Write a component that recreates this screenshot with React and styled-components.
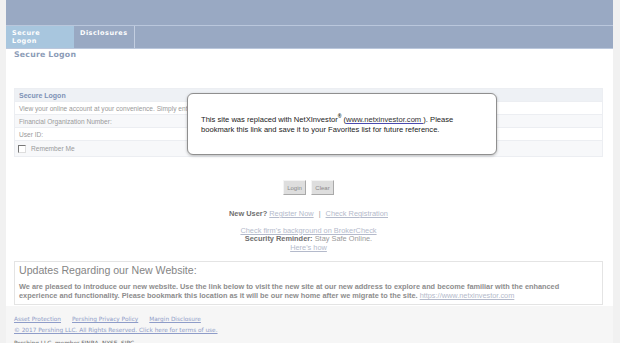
import React from "react";
import styled, { createGlobalStyle } from "styled-components";

const GlobalStyle = createGlobalStyle`
  body {
    margin: 0;
    background: #f1f1f1;
    font-family: "Liberation Sans", Arial, sans-serif;
  }
`;

const Page = styled.div`
  position: relative;
  width: 607px;
  margin-left: 6px;
  background: #fff;
  height: 343px;
  overflow: hidden;
`;

const Header = styled.div`
  height: 25px;
  background: #99a9c3;
  border-bottom: 1px solid #bac7dc;
`;

const TabBar = styled.div`
  display: flex;
  height: 22px;
  background: #99a9c3;
  border-bottom: 1px solid #bac7dc;
`;

const Tab = styled.div`
  width: ${(p) => p.w}px;
  box-sizing: border-box;
  padding: 3px 0 0 6px;
  background: ${(p) => (p.active ? "#a8c6de" : "transparent")};
  border-right: 1px solid ${(p) => (p.active ? "#a8c6de" : "#c3cee0")};
  color: #fff;
  font-family: "DejaVu Sans", Verdana, sans-serif;
  font-weight: bold;
  font-size: 6.5px;
  line-height: 8px;
  letter-spacing: 0.5px;
`;

const Heading = styled.div`
  padding: 1px 8px 0;
  height: 38px;
  color: #8c9cb7;
  font-family: "DejaVu Sans", Verdana, sans-serif;
  font-weight: bold;
  font-size: 7.8px;
  line-height: 10px;
  letter-spacing: 0.2px;
`;

const Content = styled.div`
  padding: 0 10px 0 8px;
`;

const FormTable = styled.div`
  display: flex;
  flex-direction: column;
  border: 1px solid #eceef2;
`;

const Row = styled.div`
  display: flex;
  align-items: center;
  box-sizing: border-box;
  height: ${(p) => p.h || 13}px;
  padding-left: 4px;
  background: ${(p) => (p.head ? "#eef1f5" : p.alt ? "#f7f8fa" : "#fff")};
  border-top: 1px solid #eceef2;
  color: ${(p) => (p.head ? "#7d91b6" : "#9a9a9a")};
  font-weight: ${(p) => (p.head ? "bold" : "normal")};
  font-size: ${(p) => (p.head ? 7 : 6.6)}px;
  white-space: nowrap;
  &:first-child {
    border-top: none;
  }
`;

const Check = styled.span`
  display: inline-block;
  width: 6px;
  height: 6px;
  margin-right: 5px;
  margin-left: -1px;
  border-top: 1px solid #777;
  border-left: 1px solid #777;
  border-right: 1px solid #ddd;
  border-bottom: 1px solid #ddd;
  background: #fff;
`;

const Buttons = styled.div`
  display: flex;
  justify-content: center;
  gap: 5px;
  margin-top: 23px;
`;

const Button = styled.div`
  width: ${(p) => p.w}px;
  height: 15px;
  box-sizing: border-box;
  display: flex;
  align-items: center;
  justify-content: center;
  background: #dedede;
  border: 1px solid;
  border-color: #f4f4f4 #a9a9a9 #a9a9a9 #f4f4f4;
  color: #8a8a8a;
  font-size: 6px;
`;

const Links = styled.div`
  margin-top: 15px;
  text-align: center;
  font-size: 7.4px;
  line-height: 8.6px;
  color: #9a9a9a;
`;

const Line = styled.div`
  margin-top: ${(p) => p.mt || 0}px;
`;

const Label = styled.b`
  color: #6f6f6f;
`;

const Lnk = styled.span`
  color: #b4bacb;
  text-decoration: underline;
`;

const Sep = styled.span`
  margin: 0 5px;
  color: #999;
`;

const Updates = styled.div`
  margin-top: 9px;
  border: 1px solid #e4e4e4;
  padding: 2px 4px 0;
  height: 44px;
  box-sizing: border-box;
`;

const UpTitle = styled.div`
  color: #858585;
  font-size: 10.6px;
  line-height: 13px;
  margin-bottom: 5px;
`;

const UpText = styled.div`
  color: #8d8d8d;
  font-weight: bold;
  font-size: 7.35px;
  line-height: 9px;
  white-space: nowrap;
`;

const Footer = styled.div`
  background: #f6f6f6;
  margin-top: 1px;
  padding: 8px 8px 0;
  height: 40px;
  font-family: "DejaVu Sans", Verdana, sans-serif;
  font-size: 5.8px;
  line-height: 11px;
`;

const FootLinks = styled.div`
  display: flex;
  gap: 11px;
`;

const FootLink = styled.span`
  color: #8e9cc8;
  text-decoration: underline;
`;

const FootNote = styled.div`
  color: #666;
  margin-top: 2px;
`;

const Modal = styled.div`
  position: absolute;
  left: 181px;
  top: 93px;
  width: 310px;
  height: 62px;
  box-sizing: border-box;
  background: #fff;
  border: 1px solid #8f8f8f;
  border-radius: 6px;
  box-shadow: 0 1px 3px rgba(0, 0, 0, 0.25);
  padding: 21px 0 0 13px;
  color: #222;
  font-size: 7.6px;
  line-height: 10px;
`;

const Reg = styled.sup`
  font-size: 5px;
  font-weight: bold;
  line-height: 0;
`;

const ModalLink = styled.span`
  color: #333;
  text-decoration: underline;
  text-decoration-color: #4a4ab0;
`;

export default function App() {
  return (
    <>
      <GlobalStyle />
      <Page>
        <Header />
        <TabBar>
          <Tab active w={68}>
            Secure
            <br />
            Logon
          </Tab>
          <Tab w={61}>Disclosures</Tab>
        </TabBar>
        <Heading>Secure Logon</Heading>
        <Content>
          <FormTable>
            <Row head h={12}>Secure Logon</Row>
            <Row>View your online account at your convenience. Simply enter your information below.</Row>
            <Row alt>Financial Organization Number:</Row>
            <Row>User ID:</Row>
            <Row alt h={16}>
              <Check />
              Remember Me
            </Row>
          </FormTable>
          <Buttons>
            <Button w={23}>Login</Button>
            <Button w={23}>Clear</Button>
          </Buttons>
          <Links>
            <Line>
              <Label>New User?</Label> <Lnk>Register Now</Lnk>
              <Sep>|</Sep>
              <Lnk>Check Registration</Lnk>
            </Line>
            <Line mt={8}>
              <Lnk>Check firm's background on BrokerCheck</Lnk>
            </Line>
            <Line>
              <Label>Security Reminder:</Label> Stay Safe Online.
            </Line>
            <Line>
              <Lnk>Here's how</Lnk>
            </Line>
          </Links>
          <Updates>
            <UpTitle>Updates Regarding our New Website:</UpTitle>
            <UpText>
              We are pleased to introduce our new website. Use the link below to visit the new site at our new address to explore and become familiar with the enhanced
            </UpText>
            <UpText>
              experience and functionality. Please bookmark this location as it will be our new home after we migrate to the site.{" "}
              <Lnk style={{ fontWeight: "normal" }}>https://www.netxinvestor.com</Lnk>
            </UpText>
          </Updates>
        </Content>
        <Footer>
          <FootLinks>
            <FootLink>Asset Protection</FootLink>
            <FootLink>Pershing Privacy Policy</FootLink>
            <FootLink>Margin Disclosure</FootLink>
          </FootLinks>
          <FootLink>© 2017 Pershing LLC. All Rights Reserved. Click here for terms of use.</FootLink>
          <FootNote>Pershing LLC, member FINRA, NYSE, SIPC</FootNote>
        </Footer>
        <Modal>
          This site was replaced with NetXInvestor<Reg>®</Reg> (
          <ModalLink>www.netxinvestor.com </ModalLink>). Please
          <br />
          bookmark this link and save it to your Favorites list for future reference.
        </Modal>
      </Page>
    </>
  );
}
